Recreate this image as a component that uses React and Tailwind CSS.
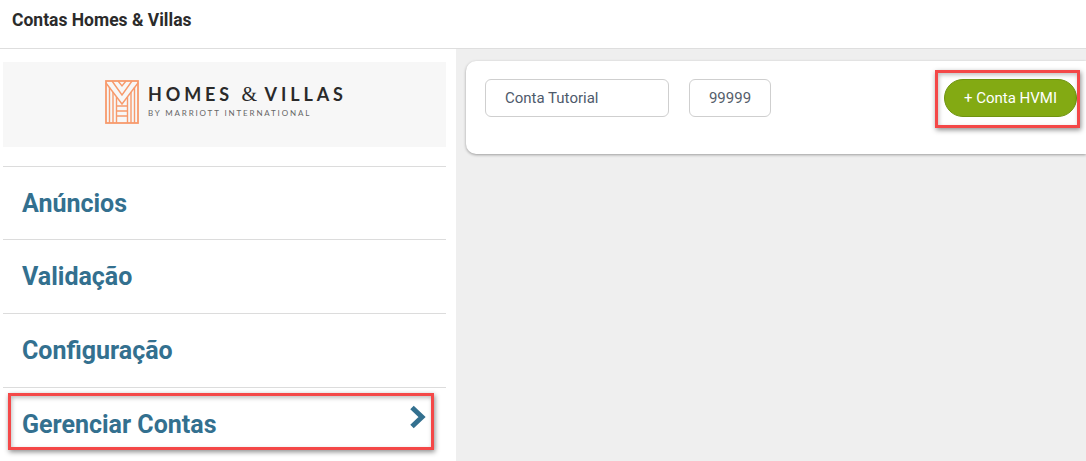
const menu = ["Anúncios", "Validação", "Configuração"];

function Logo() {
  return (
    <svg width="34" height="44" viewBox="0 0 34 44" fill="none" stroke="#f79a6c" strokeWidth="1.4">
      <rect x="1" y="1" width="32" height="42" strokeWidth="1.8" />
      <path d="M1 3 L17 24 L33 3" />
      <path d="M7 1 L17 15 L27 1" />
      <path d="M13 1 L17 6 L21 1" />
      <path d="M4.5 7 V43 M8 12 V43 M11.5 17 V43" />
      <path d="M29.5 7 V43 M26 12 V43 M22.5 17 V43" />
      <path d="M11.5 26 H22.5 M11.5 31 H22.5 M11.5 36 H22.5" />
    </svg>
  );
}

function MenuItem({ label, children }) {
  return (
    <div className="h-[74px] first:h-[73px] border-t border-[#dcdcdc] pl-[19px] pt-[21px] flex justify-between">
      <span className="text-[25px] leading-[32px] font-bold text-[#33708f]">{label}</span>
      {children}
    </div>
  );
}

export default function App() {
  return (
    <div className="relative w-[1086px] h-[461px] overflow-hidden bg-white font-['Roboto',sans-serif]">
      <header className="h-[49px] border-b border-[#dedede] pl-3 pt-[9px]">
        <h1 className="text-[17.5px] leading-[22px] font-bold text-[#2b2b2b]">Contas Homes &amp; Villas</h1>
      </header>

      <div className="flex h-[412px]">
        <aside className="w-[456px] pl-[3px] pr-[10px] pt-[13px] bg-white">
          <div className="h-[85px] bg-[#f7f7f7] flex items-center pl-[102px] pb-[5px]">
            <Logo />
            <div className="ml-[9px] text-[#2a2a2a]">
              <div className="text-[18px] leading-[20px] -mt-[1px] font-['Lato',sans-serif] font-bold tracking-[3.9px] whitespace-nowrap">
                HOMES <span className="font-['Liberation_Serif',serif] text-[20px] leading-[20px] font-normal tracking-normal">&amp;</span> VILLAS
              </div>
              <div className="mt-[4px] text-[8px] leading-[11px] font-['Lato',sans-serif] tracking-[1.85px] text-[#666] whitespace-nowrap">
                BY MARRIOTT INTERNATIONAL
              </div>
            </div>
          </div>

          <nav className="mt-[19px]">
            {menu.map((m) => (
              <MenuItem key={m} label={m} />
            ))}
            <MenuItem label="Gerenciar Contas">
              <svg width="18" height="24" viewBox="0 0 18 24" className="mr-[19px] -mt-[4px]" fill="none" stroke="#33708f" strokeWidth="5">
                <path d="M3 2.5 L13 12 L3 21.5" />
              </svg>
            </MenuItem>
          </nav>
        </aside>

        <main className="flex-1 bg-[#efefef] pt-[12px] pl-[10px]">
          <div className="h-[93px] bg-white rounded-l-[10px] shadow-[0_1px_3px_rgba(0,0,0,0.35)] flex items-start pl-[19px] pt-[18px] pr-[9px]">
            <div className="w-[184px] h-[38px] border border-[#cfcfcf] rounded-[6px] pl-[19px] text-[15px] leading-[37px] text-[#4e5a6b]">
              Conta Tutorial
            </div>
            <div className="w-[82px] h-[38px] ml-[20px] border border-[#cfcfcf] rounded-[6px] text-center text-[15px] leading-[37px] text-[#555e6b]">
              99999
            </div>
            <button className="ml-auto w-[133px] h-[38px] rounded-full bg-[#83aa13] border border-[#6f9410] text-white text-[15px]">
              + Conta HVMI
            </button>
          </div>
        </main>
      </div>

      <div className="absolute left-[8px] top-[393px] w-[426px] h-[57px] border-[3px] border-[#f44848] shadow-[1px_2px_5px_rgba(0,0,0,0.45),inset_1px_2px_4px_rgba(0,0,0,0.25)]" />
      <div className="absolute left-[935px] top-[70px] w-[145px] h-[58px] border-[3px] border-[#f44848] shadow-[1px_2px_5px_rgba(0,0,0,0.45),inset_1px_2px_4px_rgba(0,0,0,0.25)]" />
    </div>
  );
}
